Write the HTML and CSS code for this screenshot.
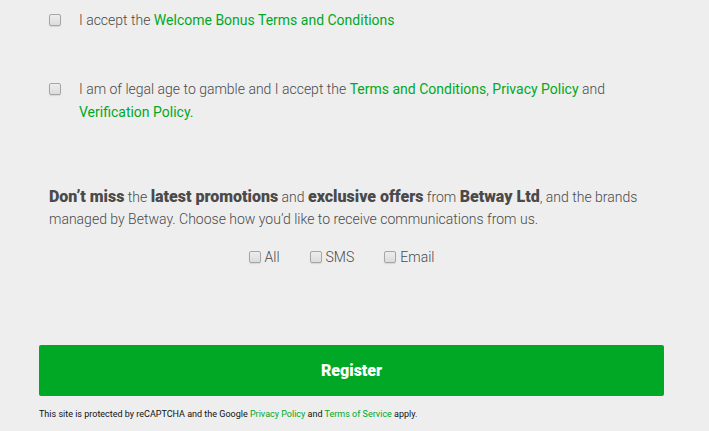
FILE: index.html
```html
<!DOCTYPE html>
<html lang="en">
<head>
<meta charset="utf-8">
<title>Register</title>
<link rel="stylesheet" href="styles.css">
</head>
<body>
<form class="form">
  <div class="consent">
    <input class="check" type="checkbox" id="bonus">
    <label for="bonus">I accept the <a href="#">Welcome Bonus Terms and Conditions</a></label>
  </div>
  <div class="consent">
    <input class="check" type="checkbox" id="age">
    <label for="age">I am of legal age to gamble and I accept the <a href="#">Terms and Conditions</a>, <a href="#">Privacy Policy</a> and <a href="#">Verification Policy.</a></label>
  </div>
  <div class="marketing">
    <p class="intro"><strong>Don’t miss</strong> the <strong>latest promotions</strong> and <strong>exclusive offers</strong> from <strong>Betway Ltd</strong>, and the brands managed by Betway. Choose how you’d like to receive communications from us.</p>
    <div class="channels">
      <div class="channel"><input class="check" type="checkbox" id="all"><label for="all">All</label></div>
      <div class="channel"><input class="check" type="checkbox" id="sms"><label for="sms">SMS</label></div>
      <div class="channel"><input class="check" type="checkbox" id="email"><label for="email">Email</label></div>
    </div>
  </div>
  <button class="register" type="submit">Register</button>
  <p class="legal">This site is protected by reCAPTCHA and the Google <a href="#">Privacy Policy</a> and <a href="#">Terms of Service</a> apply.</p>
</form>
</body>
</html>
```
FILE: styles.css
```css
* {
  box-sizing: border-box;
}

body {
  margin: 0;
  background: #eee;
  color: #4a4a4a;
  font: 300 14px/22px Roboto, "Liberation Sans", sans-serif;
}

a {
  color: #00a826;
  font-weight: 400;
  text-decoration: none;
}

p {
  margin: 0;
}

.form {
  padding: 9px 45px 0 39px;
}

.consent {
  display: flex;
  align-items: flex-start;
  gap: 18px;
  margin-bottom: 46px;
  padding: 0 50px 0 10px;
  line-height: 23px;
}

.check {
  appearance: none;
  flex: none;
  width: 12px;
  height: 12px;
  margin: 5px 0 0;
  border: 1px solid #a6a6a6;
  border-radius: 2px;
  background: linear-gradient(#ededed, #dcdcdc);
  box-shadow: 0 1px 1px #d5d5d5;
}

.check:checked {
  background: #00a826;
}

.marketing {
  margin-top: 62px;
  padding: 0 10px;
}

.intro strong {
  font-size: 16px;
  font-weight: 900;
}

.channels {
  display: flex;
  justify-content: center;
  gap: 30px;
  margin-top: 16px;
  padding-right: 20px;
}

.channel {
  display: flex;
  gap: 4px;
}

.register {
  display: block;
  width: 100%;
  margin-top: 77px;
  padding: 14px;
  border: 0;
  border-radius: 2px;
  background: #00a826;
  color: #fff;
  font: 900 16px/23px Roboto, "Liberation Sans", sans-serif;
}

.legal {
  margin-top: 10px;
  color: #111;
  font-size: 9px;
  font-weight: 400;
  line-height: 16px;
}
```
